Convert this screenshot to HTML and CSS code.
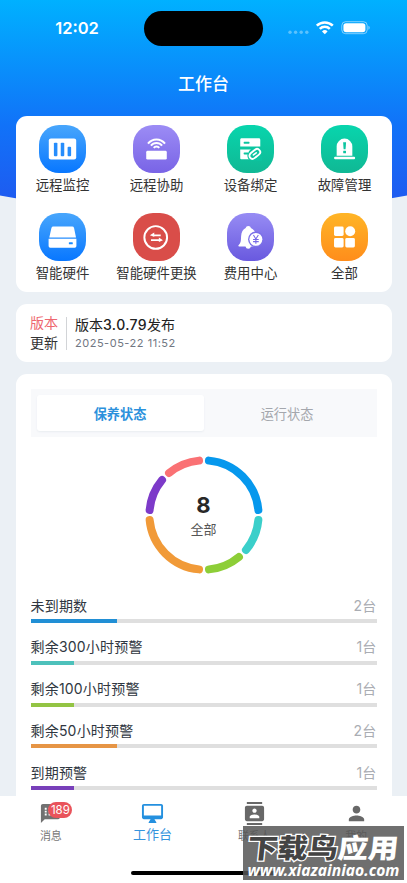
FILE: index.html
```html
<!DOCTYPE html>
<html lang="zh-CN">
<head>
<meta charset="utf-8">
<meta name="viewport" content="width=device-width, initial-scale=1">
<title>工作台</title>
<link rel="stylesheet" href="styles.css">
</head>
<body>
<div class="screen">
  <header class="status">
    <div class="time">12:02</div>
    <div class="island"></div>
    <div class="signals">
      <svg width="84" height="16" viewBox="0 0 84 16" fill="#fff">
        <g opacity=".35"><circle cx="3" cy="12.2" r="1.7"/><circle cx="8.6" cy="12.2" r="1.7"/><circle cx="14.2" cy="12.2" r="1.7"/><circle cx="19.8" cy="12.2" r="1.7"/></g>
        <g fill="none" stroke="#fff" stroke-width="2.5"><path d="M29.8 5.7a11.3 11.3 0 0 1 16 0"/><path d="M32.8 8.9a7 7 0 0 1 10 0"/></g>
        <path d="M35 11.4a4 4 0 0 1 5.6 0L37.8 14.2z"/>
        <rect x="54.8" y="1.7" width="25.4" height="12" rx="3.8" fill="none" stroke="#fff" stroke-opacity=".5"/>
        <rect x="56.4" y="3.2" width="22" height="9" rx="2.6"/>
        <path d="M81.4 5.8c1.8.6 1.8 3.4 0 4z" opacity=".5"/>
      </svg>
    </div>
  </header>
  <h1 class="title">工作台</h1>

  <main class="content">
    <section class="card services">
      <div class="service"><div class="tile blue"><svg viewBox="0 0 48 48" fill="#fff"><rect x="10" y="13.2" width="28" height="21.6" rx="2.2"/><g fill="#268dfc"><rect x="15.2" y="17.5" width="3.6" height="14" rx="1"/><rect x="22.2" y="17.5" width="3.6" height="14" rx="1"/><rect x="29.2" y="21.7" width="3.6" height="9.8" rx="1"/></g></svg></div><span>远程监控</span></div>
      <div class="service"><div class="tile purple"><svg viewBox="0 0 48 48" fill="none" stroke="#fff" stroke-width="2"><rect x="13.5" y="25.8" width="21" height="9" rx="1.4" fill="#fff" stroke="none"/><path d="M15.3 18.5a11 11 0 0 1 17.4 0M18.3 20.6a7.2 7.2 0 0 1 11.4 0M21.2 22.9a3.5 3.5 0 0 1 5.6 0"/></svg></div><span>远程协助</span></div>
      <div class="service"><div class="tile green"><svg viewBox="0 0 48 48" fill="#fff"><path d="M14.5 13h18a1.5 1.5 0 0 1 1.5 1.5v7H13.5v-7a1.5 1.5 0 0 1 1-1.5zM13.5 24.5H34V33a1.5 1.5 0 0 1-1.5 1.5h-18a1 1 0 0 1-1-1z"/><g fill="#0cc5a0"><rect x="17" y="16.6" width="6" height="2" rx=".7"/><rect x="17" y="27.5" width="5" height="2" rx=".7"/><ellipse cx="28.4" cy="29" rx="8.3" ry="6.2" transform="rotate(-38 28.4 29)"/><path d="M30 31h6v5h-6z"/></g><g fill="none" stroke="#fff" stroke-width="1.9" stroke-linecap="round" transform="rotate(-38 28.4 29)"><path d="M29 25.8h-3.5a3.2 3.2 0 0 0 0 6.4h1.5"/><path d="M27.8 32.2h3.5a3.2 3.2 0 0 0 0-6.4h-1.5"/><path d="M26.6 29h3.6" stroke-width="1.6"/></g></svg></div><span>设备绑定</span></div>
      <div class="service"><div class="tile green"><svg viewBox="0 0 48 48" fill="#fff"><path d="M16 31v-9.6a8 8 0 0 1 16 0V31z"/><rect x="13.4" y="31.8" width="21.4" height="2.6" rx="1"/><path d="M22.6 17.2h3l-.5 7h-2z" fill="#0cc5a0"/><rect x="22.7" y="25.7" width="2.8" height="2.7" rx=".4" fill="#0cc5a0"/></svg></div><span>故障管理</span></div>
      <div class="service"><div class="tile blue"><svg viewBox="0 0 48 48" fill="#fff"><path d="M14.7 13.3h19.1a2 2 0 0 1 2 1.5l2 9.6H10.5l2.2-9.6a2 2 0 0 1 2-1.5zM9.8 25.8h28.4v7.5a1.7 1.7 0 0 1-1.7 1.7h-25a1.7 1.7 0 0 1-1.7-1.7z"/><rect x="30.5" y="29.3" width="4" height="2.2" rx=".6" fill="#188bff"/></svg></div><span>智能硬件</span></div>
      <div class="service"><div class="tile red"><svg viewBox="0 0 48 48" fill="none" stroke="#fff"><circle cx="23.2" cy="24.5" r="11.6" stroke-width="2"/><path d="M20 22.3h8.3M18.4 27.2h9" stroke-width="1.9"/><path d="M17.2 22.3l4.5-2.8v4.2zM30.6 27.2l-4.2-2.8v4.8z" fill="#fff" stroke="none"/></svg></div><span>智能硬件更换</span></div>
      <div class="service"><div class="tile violet"><svg viewBox="0 0 48 48" fill="#fff"><path d="M21.7 12.7c1.6 0 2.4.9 2.7 2 3 1.3 4.6 4 4.8 6.5l.4 8.8 2 2.4c.5.8.1 1.3-.8 1.3h-6.4a2.8 2.8 0 0 1-5.5 0h-6.4c-.9 0-1.3-.7-.7-1.4 2.5-2.4 2.3-3.8 2.6-9 .2-4.2 1.9-7.2 4.7-8.500.3-1.3 1.2-2.1 2.6-2.1z"/><circle cx="29.5" cy="26.4" r="8" fill="#7b70e8"/><circle cx="29.5" cy="26.4" r="6.6"/><path d="M27 22l2.5 4 2.5-4M26.6 26.5h5.8M26.6 28.7h5.8M29.5 26v5" fill="none" stroke="#7669e6" stroke-width="1.1"/></svg></div><span>费用中心</span></div>
      <div class="service"><div class="tile orange"><svg viewBox="0 0 48 48" fill="#fff"><rect x="13.3" y="13.2" width="9.8" height="9.8" rx="1.5"/><circle cx="29.8" cy="18.1" r="5.1"/><rect x="13.3" y="25" width="9.8" height="9.8" rx="1.5"/><rect x="24.8" y="25" width="9.8" height="9.8" rx="1.5"/></svg></div><span>全部</span></div>
    </section>

    <section class="card notice">
      <div class="notice-tag"><span class="hot">版本</span><span>更新</span></div>
      <div class="notice-body"><strong>版本<b>3.0.79</b>发布</strong><time>2025-05-22 11:52</time></div>
    </section>

    <section class="card stats">
      <div class="segmented"><div class="segment active">保养状态</div><div class="segment">运行状态</div></div>
      <div class="donut">
        <svg width="118" height="118" viewBox="-59 -59 118 118" fill="none" stroke-width="8" stroke-linecap="round">
          <circle r="54.6" pathLength="360" stroke="#0698ed" stroke-dasharray="79.6 280.4" transform="rotate(-84.8)"/>
          <circle r="54.6" pathLength="360" stroke="#3bcfca" stroke-dasharray="34.6 325.4" transform="rotate(5.2)"/>
          <circle r="54.6" pathLength="360" stroke="#8dce37" stroke-dasharray="34.6 325.4" transform="rotate(50.2)"/>
          <circle r="54.6" pathLength="360" stroke="#f19a38" stroke-dasharray="79.6 280.4" transform="rotate(95.2)"/>
          <circle r="54.6" pathLength="360" stroke="#7d3ac9" stroke-dasharray="34.6 325.4" transform="rotate(185.2)"/>
          <circle r="54.6" pathLength="360" stroke="#fa7174" stroke-dasharray="34.6 325.4" transform="rotate(230.2)"/>
        </svg>
        <div class="total"><b>8</b><span>全部</span></div>
      </div>
      <div class="rows">
        <div class="row"><div class="line"><span>未到期数</span><em>2台</em></div><div class="track"><i class="bar two sky"></i></div></div>
        <div class="row"><div class="line"><span>剩余300小时预警</span><em>1台</em></div><div class="track"><i class="bar one teal"></i></div></div>
        <div class="row"><div class="line"><span>剩余100小时预警</span><em>1台</em></div><div class="track"><i class="bar one lime"></i></div></div>
        <div class="row"><div class="line"><span>剩余50小时预警</span><em>2台</em></div><div class="track"><i class="bar two amber"></i></div></div>
        <div class="row"><div class="line"><span>到期预警</span><em>1台</em></div><div class="track"><i class="bar one plum"></i></div></div>
      </div>
    </section>
  </main>

  <nav class="tabs">
    <div class="tab"><div class="icon"><svg width="23" height="23" viewBox="0 0 24 24" fill="#717171"><path d="M20 2H4c-1.1 0-2 .9-2 2v18l4-4h14c1.1 0 2-.9 2-2V4c0-1.1-.9-2-2-2zM8 14H6v-2h2v2zm0-3H6V9h2v2zm0-3H6V6h2v2zm7 6h-5v-2h5v2zm3-3h-8V9h8v2zm0-3h-8V6h8v2z"/></svg><span class="badge">189</span></div><span>消息</span></div>
    <div class="tab current"><div class="icon"><svg width="23" height="23" viewBox="0 0 24 24" fill="#2490df"><path d="M21 2H3c-1.1 0-2 .9-2 2v12c0 1.1.9 2 2 2h7l-2 3v1h8v-1l-2-3h7c1.1 0 2-.9 2-2V4c0-1.1-.9-2-2-2zm0 12H3V4h18v10z"/></svg></div><span>工作台</span></div>
    <div class="tab"><div class="icon"><svg width="23" height="23" viewBox="0 0 24 24" fill="#686868"><path d="M20 0H4v2h16V0zM4 24h16v-2H4v2zM20 4H4c-1.1 0-2 .9-2 2v12c0 1.1.9 2 2 2h16c1.1 0 2-.9 2-2V6c0-1.1-.9-2-2-2zm-8 2.75c1.24 0 2.25 1.01 2.25 2.25s-1.01 2.25-2.25 2.25S9.75 10.24 9.75 9 10.76 6.75 12 6.75zM17 17H7v-1.5c0-1.67 3.33-2.5 5-2.5s5 .83 5 2.5V17z"/></svg></div><span>联系人</span></div>
    <div class="tab"><div class="icon"><svg width="23" height="23" viewBox="0 0 24 24" fill="#686868"><path d="M12 12c2.21 0 4-1.79 4-4s-1.79-4-4-4-4 1.79-4 4 1.79 4 4 4zm0 2c-2.67 0-8 1.34-8 4v2h16v-2c0-2.66-5.33-4-8-4z"/></svg></div><span>我的</span></div>
    <div class="home"></div>
  </nav>

  <aside class="stamp">
    <div class="brand"><span class="outline">下载鸟</span><span>应用</span></div>
    <div class="site">www.xiazainiao.com</div>
  </aside>
</div>
</body>
</html>
```
FILE: styles.css
```css
* { box-sizing: border-box; }
body { margin: 0; font-family: Inter, "Noto Sans CJK SC", sans-serif; }
.screen {
  position: relative;
  display: flex;
  flex-direction: column;
  width: 407px;
  height: 883px;
  overflow: hidden;
  background: #ebf0f5;
  isolation: isolate;
}
.screen::before {
  content: "";
  position: absolute;
  z-index: -1;
  top: 0;
  left: -50px;
  right: -50px;
  height: 210px;
  background: linear-gradient(#00b1ff, #1172f8 60%, #2058ef);
  border-radius: 0 0 50% 50% / 0 0 36px 36px;
}
.status {
  display: grid;
  grid-template-columns: 1fr 119px 1fr;
  align-items: center;
  height: 56px;
  flex: none;
}
.time { padding-left: 10px; text-align: center; color: #fff; font-size: 16.5px; font-weight: 600; }
.island { height: 35px; border-radius: 18px; background: #000; }
.signals { display: flex; padding-left: 24px; }
.title { flex: none; height: 60px; margin: 0; padding-top: 15px; color: #fff; font-size: 17px; line-height: 26px; font-weight: 500; text-align: center; }
.content { flex: 1; min-height: 0; overflow: hidden; padding: 0 15.5px; display: flex; flex-direction: column; gap: 11.5px; }
.card { flex: none; background: #fff; border-radius: 11px; }
.services { display: grid; grid-template-columns: repeat(4, 1fr); height: 176px; padding-top: 9px; grid-auto-rows: 88px; }
.service { display: flex; flex-direction: column; align-items: center; gap: 2px; font-size: 13.4px; line-height: 20px; color: #333; white-space: nowrap; }
.tile { width: 47px; height: 48px; border-radius: 20px; }
.tile svg { display: block; width: 47px; height: 48px; }
.blue { background: linear-gradient(#48a6fc, #0877ff); }
.purple { background: linear-gradient(#9c8cf5, #7964e6); }
.violet { background: linear-gradient(#978cf4, #6959df); }
.green { background: linear-gradient(#08d5ad, #10b894); }
.red { background: #d94d49; }
.orange { background: linear-gradient(#ffb526, #ff8d1b); }
.notice { display: flex; height: 58.5px; padding: 9px 14.5px; }
.notice-tag { display: flex; flex-direction: column; width: 36px; height: 40px; font-size: 14px; line-height: 20px; color: #333; }
.hot { color: #ee6870; }
.notice-body { display: flex; flex-direction: column; height: 33px; margin-top: 4px; padding-left: 8px; border-left: 1px solid #d2d4d7; }
.notice-body strong { margin-top: -2px; font-size: 14px; line-height: 19px; font-weight: 400; color: #222; }
.notice-body b { font-weight: 500; letter-spacing: .4px; }
.notice-body time { font-size: 11px; line-height: 16px; letter-spacing: .52px; color: #707682; margin-top: 1px; }
.stats { padding: 15.5px 15px; height: 480px; }
.segmented { display: grid; grid-template-columns: 1fr 1fr; height: 48px; padding: 6px; background: #f8f9fb; }
.segment { display: flex; align-items: center; justify-content: center; font-size: 13.2px; color: #a4a7ad; }
.segment.active { border-radius: 3px; background: #fff; color: #2c91dc; font-weight: 700; box-shadow: 0 1px 2px #e9edf1; }
.donut { display: grid; place-items: center; height: 118px; margin-top: 19px; }
.donut > * { grid-area: 1 / 1; }
.total { display: flex; flex-direction: column; align-items: center; color: #555; font-size: 13px; line-height: 20px; }
.total b { font-size: 22px; line-height: 28px; color: #282828; }
.rows { margin-top: 19.5px; }
.row { height: 41.75px; }
.line { display: flex; justify-content: space-between; height: 25.5px; font-size: 14px; line-height: 23px; letter-spacing: .2px; color: #303741; }
.line em { font-style: normal; color: #aaadb3; font-size: 14px; }
.track { height: 4px; background: #dfdfdf; }
.bar { display: block; height: 4px; }
.one { width: 12.5%; }
.two { width: 25%; }
.sky { background: #218fd5; }
.teal { background: #4dc1bb; }
.lime { background: #93c443; }
.amber { background: #e69545; }
.plum { background: #783fba; }
.tabs { position: relative; flex: none; display: grid; grid-template-columns: repeat(4, 1fr); height: 87px; padding-top: 6px; background: #fff; }
.tab { display: flex; flex-direction: column; align-items: center; font-size: 11px; line-height: 18px; color: #777; }
.icon { position: relative; height: 24px; }
.icon svg { display: block; }
.tab > span { margin-top: 1px; }
.current { color: #3494dd; font-size: 13px; }
.current > span { margin-top: -1px; }
.badge { position: absolute; left: 9px; top: 0; width: 24px; height: 16px; border-radius: 8px; background: #e9535b; color: #fff; font-size: 11.5px; line-height: 16px; text-align: center; }
.home { position: absolute; left: 131px; bottom: 8px; width: 145px; height: 4.5px; border-radius: 3px; background: #000; }
.stamp { position: absolute; left: 243px; top: 826px; width: 161px; height: 54px; background: rgba(86, 86, 86, .85); color: #fff; text-align: center; white-space: nowrap; }
.brand { height: 35px; padding-top: 4px; font: 900 27px/34px "Noto Sans CJK SC", sans-serif; transform: skewX(-6deg) scaleX(1.12); }
.outline { color: #444; -webkit-text-stroke: 2.5px #fff; paint-order: stroke fill; }
.site { font: italic 700 15.6px/18px "Noto Sans", sans-serif; }
```
